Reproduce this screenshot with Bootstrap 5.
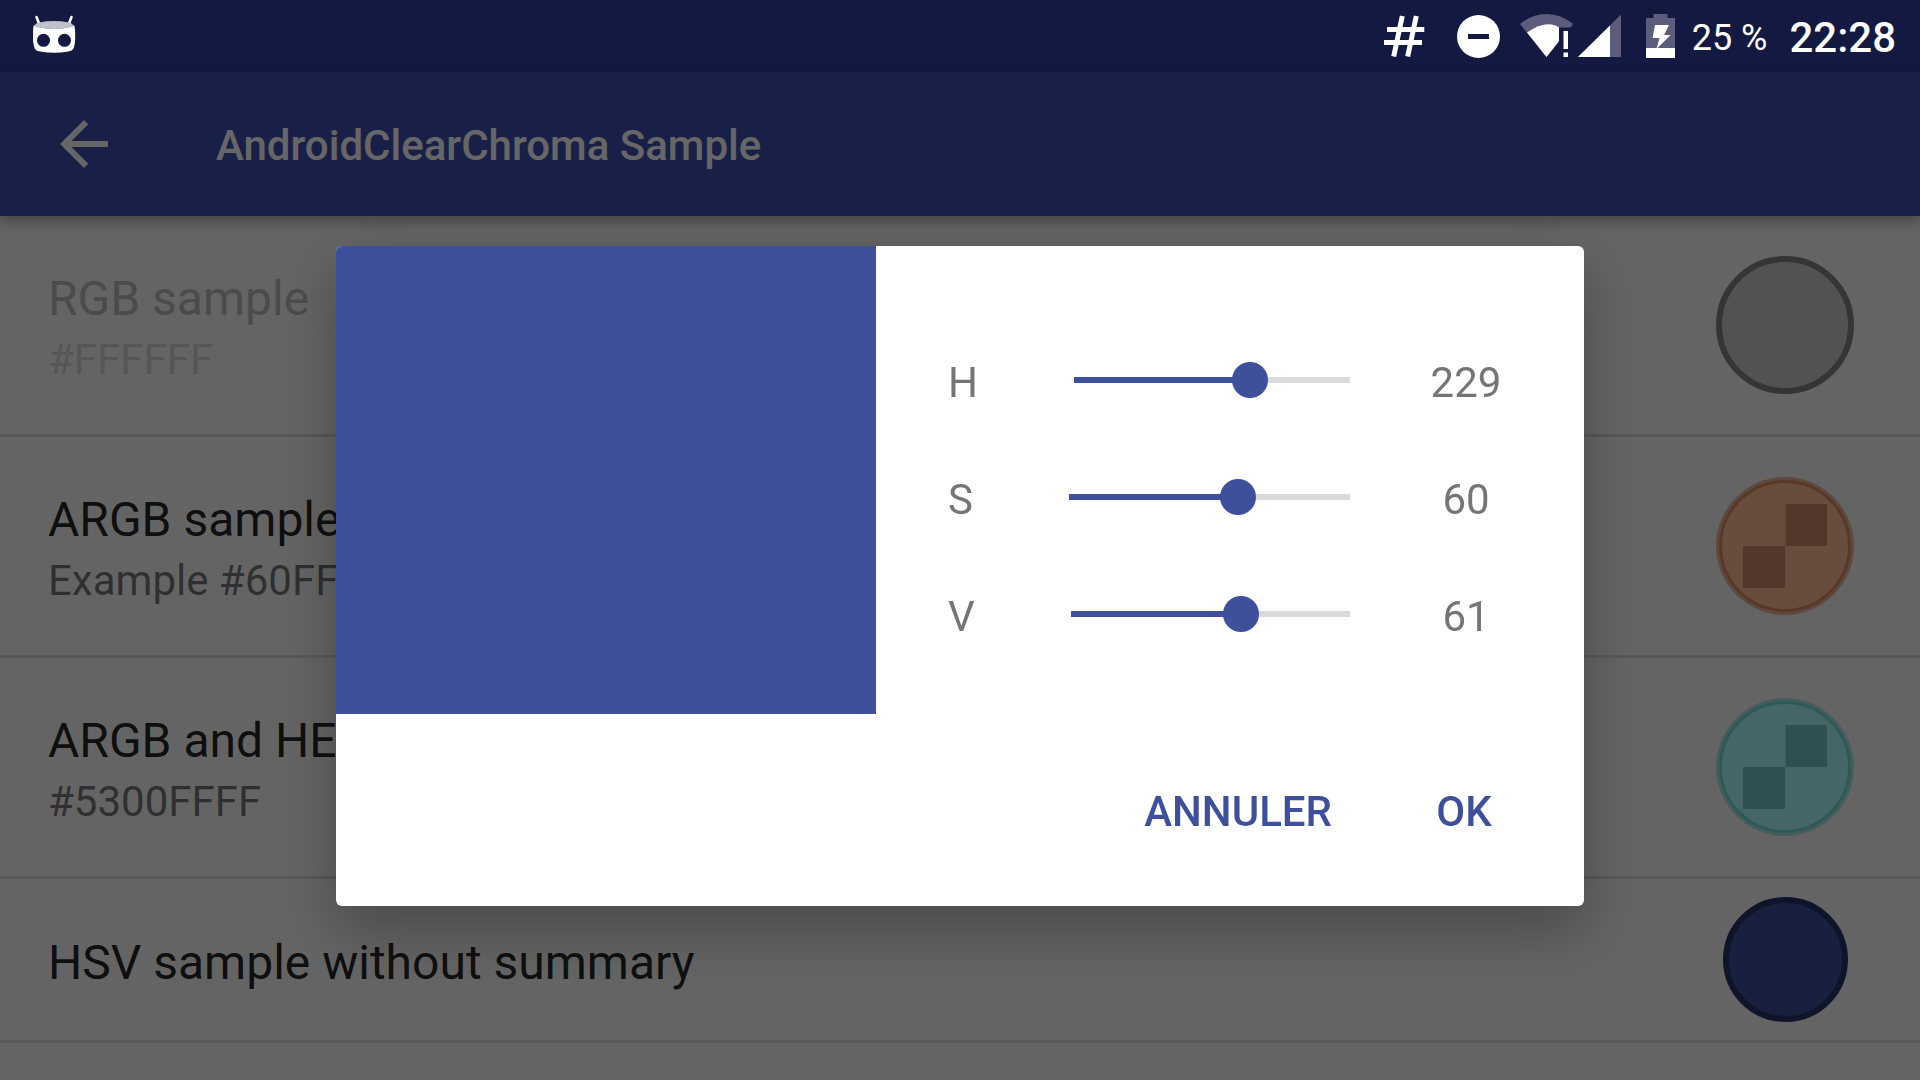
<!DOCTYPE html>
<html lang="fr">
<head>
<meta charset="utf-8">
<meta name="viewport" content="width=device-width, initial-scale=1">
<title>AndroidClearChroma Sample</title>
<link href="https://cdn.jsdelivr.net/npm/bootstrap@5.3.0/dist/css/bootstrap.min.css" rel="stylesheet">
<style>
  :root { --accent: #3e4f9c; }
  body { font-family: Roboto, "Noto Sans", sans-serif; background: #fafafa; color: rgba(0,0,0,.87); overflow: hidden; }
  svg { display: block; flex: none; }

  .status-bar { height: 72px; padding: 0 24px 0 32px; background: #131940; color: #fff; }
  .status-text { padding-top: 4px; font-size: 36px; line-height: 42px; }
  .status-clock { padding: 4px 0 0 22px; font-size: 42px; line-height: 42px; font-weight: 500; }

  .app-bar { height: 144px; padding: 0 48px; gap: 96px; background: #3f51b5; box-shadow: 0 6px 12px rgba(0,0,0,.3); z-index: 1; }
  .app-title { padding-top: 4px; font-size: 42px; line-height: 48px; font-weight: 500; color: #fff; }

  .list-group-flush > .pref-row { min-height: 221px; padding: 0 66px 0 48px; background: transparent; border-width: 0 0 3px; border-color: #dcdcdc; color: inherit; }
  .list-group-flush > .pref-row.compact:last-child { min-height: 164px; border-bottom-width: 3px; }
  .pref-text { padding-top: 6px; }
  .pref-title { font-size: 48px; line-height: 64px; }
  .pref-summary { font-size: 42px; line-height: 58px; color: rgba(0,0,0,.54); }
  .pref-off .pref-title { color: #bcbcbc; }
  .pref-off .pref-summary { color: #d6d6d6; }
  .swatch-cell { width: 138px; }

  .scrim { top: 72px; background: rgba(0,0,0,.6); z-index: 5; }
  .chroma-dialog { width: 65%; border-radius: 6px; background: #fff; box-shadow: 0 24px 60px rgba(0,0,0,.28); overflow: hidden; }
  .preview { flex: 0 0 540px; background: var(--accent); }
  .channels { min-height: 468px; padding: 113px 48px 0 72px; gap: 75px; font-size: 42px; line-height: 36px; color: #757575; }
  .channel-text { padding-top: 6px; }
  .channel-value { width: 140px; margin-left: 28px; }
  .channel-range { flex: 1 1 0; min-width: 0; height: 36px; margin-left: 78px; }
  .channel-range::-webkit-slider-runnable-track {
    height: 36px; border-radius: 0;
    background: linear-gradient(to right, var(--accent) var(--level), #dadada var(--level)) center / calc(100% - 36px) 6px no-repeat;
  }
  .channel-range::-webkit-slider-thumb { width: 36px; height: 36px; margin-top: 0; border-radius: 50%; background: var(--accent); }
  .dialog-actions { min-height: 192px; padding: 4px 24px 0; gap: 12px; }
  .dialog-btn { min-width: 192px; height: 108px; padding: 0 24px; font-size: 42px; line-height: 48px; font-weight: 500; color: var(--accent); border: 0; }
</style>
<script src="https://cdn.jsdelivr.net/npm/bootstrap@5.3.0/dist/js/bootstrap.bundle.min.js"></script>
</head>
<body class="min-vh-100">

<header class="status-bar d-flex align-items-center justify-content-between">
  <svg width="44" height="44" viewBox="32 14 44 44" aria-label="CyanogenMod">
    <path d="M36.500 17l2.500 6.500M71.500 17l-2.500 6.500" stroke="#fff" stroke-width="2.600" stroke-linecap="round"/>
    <path d="M34 25C40 30 68 30 74 25q1.200 1 1.200 12q0 8-2 12q-1.500 2-5 2.500q-14 2.500-28 0q-4-.5-5.200-2.500q-2-4-2-12q0-11 1-12z" fill="#fff"/>
    <ellipse cx="54" cy="25" rx="19" ry="4" fill="#bfc1cd"/>
    <circle cx="43.500" cy="40.300" r="6.500" fill="#131940"/><circle cx="64.500" cy="40.300" r="6.500" fill="#131940"/>
  </svg>
  <div class="d-flex align-items-center">
    <svg class="me-3" width="56" height="44" viewBox="1384 14 56 44" aria-hidden="true">
      <path d="M1402.300 16l-8.600 40.500M1416.300 16l-8.600 40.500M1387 29.500h37.300M1384 42.500h38" stroke="#fff" stroke-width="5" fill="none"/>
    </svg>
    <svg width="64" height="44" viewBox="1456 14 64 44" aria-hidden="true">
      <circle cx="1478.500" cy="36.500" r="21.500" fill="#fff" /><path d="M1468 34h21v5h-21z" fill="#131940"/>
    </svg>
    <svg width="57" height="44" viewBox="1520 14 57 44" aria-hidden="true">
      <path d="M1520 24Q1532 14 1546.500 14T1573 24l-2.500 3.500H1559V42l-12.500 15z" fill="#5c5d7c"/>
      <path d="M1527 32.500q19.500-13.500 32-5V41l-12.500 16z" fill="#fff"/>
      <path d="M1563.500 31h4.500v18h-4.500zM1563.500 52.500h4.500v4.500h-4.500z" fill="#fff"/>
    </svg>
    <svg width="69" height="44" viewBox="1577 14 69 44" aria-hidden="true">
      <path d="M1621 14.500V57h-43z" fill="#5c5d7c"/><path d="M1610 25.500V57h-32z" fill="#fff"/>
    </svg>
    <svg width="46" height="44" viewBox="1646 14 46 44" aria-hidden="true">
      <path d="M1653.500 14h14v4h7.500v40h-29V18h7.500z" fill="#5c5d7c"/><path d="M1646 48h29v10h-29z" fill="#fff"/>
      <path d="M1655 25h14l-5 10h6.500l-14 14 3-11h-7z" fill="#fff"/>
    </svg>
    <span class="status-text">25 %</span>
    <span class="status-clock">22:28</span>
  </div>
</header>

<nav class="app-bar position-relative d-flex align-items-center">
  <a href="#" aria-label="Retour">
    <svg width="72" height="72" viewBox="0 0 24 24"><path d="M20 11H7.830l5.590-5.590L12 4l-8 8 8 8 1.410-1.410L7.830 13H20v-2z" fill="#fff"/></svg>
  </a>
  <h1 class="app-title m-0">AndroidClearChroma Sample</h1>
</nav>

<main class="list-group list-group-flush">
  <div class="pref-row pref-off list-group-item d-flex align-items-center justify-content-between">
    <div class="pref-text"><div class="pref-title">RGB sample</div><div class="pref-summary">#FFFFFF</div></div>
    <svg width="138" height="138" viewBox="0 0 138 138"><circle cx="69" cy="69" r="66" fill="#cdcdcd" stroke="#858585" stroke-width="6"/></svg>
  </div>
  <div class="pref-row list-group-item d-flex align-items-center justify-content-between">
    <div class="pref-text"><div class="pref-title">ARGB sample</div><div class="pref-summary">Example #60FF</div></div>
    <svg width="138" height="138" viewBox="0 0 138 138">
      <circle cx="69" cy="69" r="69" fill="#e6b9a0"/><circle cx="69" cy="69" r="64.500" fill="#ffc098" stroke="#de8e60" stroke-width="3"/>
      <path d="M69.500 27H111v42H69.500zM27 69h42v42H27z" fill="#cd8a6a"/>
    </svg>
  </div>
  <div class="pref-row list-group-item d-flex align-items-center justify-content-between">
    <div class="pref-text"><div class="pref-title">ARGB and HEX</div><div class="pref-summary">#5300FFFF</div></div>
    <svg width="138" height="138" viewBox="0 0 138 138">
      <circle cx="69" cy="69" r="69" fill="#ace6e4"/><circle cx="69" cy="69" r="64.500" fill="#aaffff" stroke="#70e1de" stroke-width="3"/>
      <path d="M69.500 27H111v42H69.500zM27 69h42v42H27z" fill="#73c8c8"/>
    </svg>
  </div>
  <div class="pref-row compact list-group-item d-flex align-items-center justify-content-between">
    <div class="pref-text"><div class="pref-title">HSV sample without summary</div></div>
    <div class="swatch-cell d-flex justify-content-center">
      <svg width="125" height="125" viewBox="0 0 125 125"><circle cx="62.500" cy="62.500" r="59.500" fill="#3f4f9c" stroke="#283264" stroke-width="6"/></svg>
    </div>
  </div>
</main>

<div class="scrim position-fixed start-0 end-0 bottom-0 d-flex align-items-center justify-content-center">
  <form class="chroma-dialog" role="dialog" aria-label="HSV">
    <div class="d-flex">
      <div class="preview"></div>
      <div class="channels flex-grow-1 d-flex flex-column">
        <div class="d-flex align-items-center">
          <label class="channel-text" for="hue">H</label>
          <input class="channel-range form-range" type="range" id="hue" min="0" max="360" value="229" style="--level:63.6%">
          <output class="channel-text channel-value text-center" for="hue">229</output>
        </div>
        <div class="d-flex align-items-center">
          <label class="channel-text" for="saturation">S</label>
          <input class="channel-range form-range" type="range" id="saturation" min="0" max="100" value="60" style="--level:60%">
          <output class="channel-text channel-value text-center" for="saturation">60</output>
        </div>
        <div class="d-flex align-items-center">
          <label class="channel-text" for="brightness">V</label>
          <input class="channel-range form-range" type="range" id="brightness" min="0" max="100" value="61" style="--level:61%">
          <output class="channel-text channel-value text-center" for="brightness">61</output>
        </div>
      </div>
    </div>
    <div class="dialog-actions d-flex align-items-center justify-content-end">
      <button type="button" class="dialog-btn btn">ANNULER</button>
      <button type="button" class="dialog-btn btn">OK</button>
    </div>
  </form>
</div>
</body>
</html>
